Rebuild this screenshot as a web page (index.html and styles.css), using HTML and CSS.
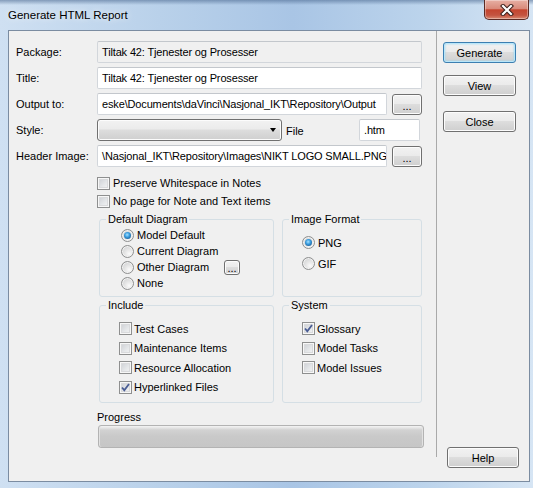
FILE: index.html
```html
<!DOCTYPE html>
<html>
<head>
<meta charset="utf-8">
<title>Generate HTML Report</title>
<link rel="stylesheet" href="styles.css">
</head>
<body>
<div class="window">
  <div class="titlebar">
    <span class="caption">Generate HTML Report</span>
    <div class="close">
      <svg width="14" height="12" viewBox="0 0 14 12">
        <path d="M3 2 L11 10 M11 2 L3 10" stroke="#3b1f1b" stroke-width="4.2" stroke-linecap="square" fill="none"/>
        <path d="M3 2 L11 10 M11 2 L3 10" stroke="#ffffff" stroke-width="2.2" stroke-linecap="square" fill="none"/>
      </svg>
    </div>
  </div>
  <div class="client">
    <div class="main">
      <div class="form">
        <span class="lbl">Package:</span>
        <div class="field disabled">Tiltak 42: Tjenester og Prosesser</div>
        <span class="lbl">Title:</span>
        <div class="field">Tiltak 42: Tjenester og Prosesser</div>
        <span class="lbl">Output to:</span>
        <div class="fieldrow">
          <div class="field grow">eske\Documents\daVinci\Nasjonal_IKT\Repository\Output</div>
          <div class="btn dots">...</div>
        </div>
        <span class="lbl">Style:</span>
        <div class="fieldrow">
          <div class="combo"><span class="arrow"></span></div>
          <span class="file-lbl">File</span>
          <div class="field ext">.htm</div>
        </div>
        <span class="lbl">Header Image:</span>
        <div class="fieldrow">
          <div class="field grow">\Nasjonal_IKT\Repository\Images\NIKT LOGO SMALL.PNG</div>
          <div class="btn dots">...</div>
        </div>
      </div>

      <div class="checks">
        <div class="chk"><span class="cb"></span><span>Preserve Whitespace in Notes</span></div>
        <div class="chk"><span class="cb"></span><span>No page for Note and Text items</span></div>
      </div>

      <div class="groups">
        <fieldset class="group">
          <legend>Default Diagram</legend>
          <div class="opts diag">
            <div class="opt"><span class="radio on"></span><span>Model Default</span></div>
            <div class="opt"><span class="radio"></span><span>Current Diagram</span></div>
            <div class="opt"><span class="radio"></span><span>Other Diagram</span><span class="btn mini">...</span></div>
            <div class="opt"><span class="radio"></span><span>None</span></div>
          </div>
        </fieldset>
        <fieldset class="group">
          <legend>Image Format</legend>
          <div class="opts fmt">
            <div class="opt"><span class="radio on"></span><span>PNG</span></div>
            <div class="opt"><span class="radio"></span><span>GIF</span></div>
          </div>
        </fieldset>
        <fieldset class="group">
          <legend>Include</legend>
          <div class="opts incl">
            <div class="opt"><span class="cb"></span><span>Test Cases</span></div>
            <div class="opt"><span class="cb"></span><span>Maintenance Items</span></div>
            <div class="opt"><span class="cb"></span><span>Resource Allocation</span></div>
            <div class="opt"><span class="cb on"><svg width="11" height="11" viewBox="0 0 11 11"><path d="M2 5.5 L4.3 8.2 L9 2" stroke="#4a5d94" stroke-width="1.8" fill="none"/></svg></span><span>Hyperlinked Files</span></div>
          </div>
        </fieldset>
        <fieldset class="group">
          <legend>System</legend>
          <div class="opts incl">
            <div class="opt"><span class="cb on"><svg width="11" height="11" viewBox="0 0 11 11"><path d="M2 5.5 L4.3 8.2 L9 2" stroke="#4a5d94" stroke-width="1.8" fill="none"/></svg></span><span>Glossary</span></div>
            <div class="opt"><span class="cb"></span><span>Model Tasks</span></div>
            <div class="opt"><span class="cb"></span><span>Model Issues</span></div>
          </div>
        </fieldset>
      </div>

      <div class="progress">
        <div class="prog-lbl">Progress</div>
        <div class="bar"></div>
      </div>
    </div>
    <div class="side">
      <div class="vsep"></div>
      <div class="btns">
        <div class="btn cmd default">Generate</div>
        <div class="btn cmd view">View</div>
        <div class="btn cmd">Close</div>
        <div class="btn cmd help">Help</div>
      </div>
    </div>
  </div>
</div>
</body>
</html>
```

FILE: styles.css
```css
* { box-sizing: border-box; }
html, body { margin: 0; padding: 0; }
body {
  width: 533px;
  height: 488px;
  overflow: hidden;
  font-family: "Liberation Sans", Arial, sans-serif;
  font-size: 11px;
  color: #000;
}
.window {
  width: 533px;
  height: 488px;
  display: flex;
  flex-direction: column;
  background:
    linear-gradient(180deg, rgba(70,100,140,0.55) 0, rgba(70,100,140,0) 5px),
    linear-gradient(90deg, #cfe0f2 0, #b9d1ea 30%, #a9c5e5 55%, #bcd4ec 80%, #d6e5f4 100%);
}
.titlebar {
  height: 30px;
  flex: none;
  display: flex;
  justify-content: space-between;
  align-items: flex-start;
  padding-left: 8px;
}
.caption {
  font-size: 11.5px;
  line-height: 16px;
  padding-top: 7px;
  color: #000;
  text-shadow: 0 0 6px rgba(255,255,255,0.9);
}
.close {
  width: 45px;
  height: 20px;
  margin-right: 4px;
  border: 1px solid #5b2a24;
  border-top: none;
  border-radius: 0 0 5px 5px;
  background: linear-gradient(180deg, #e7b0a4 0%, #d98a7b 45%, #c4452f 52%, #c45440 80%, #d98a72 100%);
  box-shadow: inset 0 0 0 1px rgba(255,255,255,0.35);
  display: flex;
  align-items: center;
  justify-content: center;
}
.client {
  flex: 1;
  margin: 0 3px 6px 8px;
  border: 1px solid #7b8ca1;
  background: #f0f0f0;
  display: flex;
}
.main {
  width: 427px;
  flex: none;
  display: flex;
  flex-direction: column;
}
.form {
  margin: 10px 0 0 7px;
  width: 406px;
  display: grid;
  grid-template-columns: 81px 325px;
  grid-auto-rows: 22px;
  row-gap: 4px;
}
.lbl { align-self: center; }
.field {
  height: 22px;
  border: 1px solid #d2d6db;
  border-top-color: #c3c7cc;
  border-radius: 2px;
  background: #fff;
  padding: 0 4px;
  line-height: 20px;
  white-space: nowrap;
  overflow: hidden;
  letter-spacing: -0.15px;
}
.field.disabled { background: #f0f0f0; }
.fieldrow {
  display: flex;
  align-items: center;
  gap: 5px;
}
.field.grow { flex: 1; min-width: 0; }
.btn {
  border: 1px solid #707070;
  border-radius: 3px;
  background: linear-gradient(180deg, #f2f2f2 0%, #ebebeb 45%, #dddddd 50%, #cfcfcf 100%);
  box-shadow: inset 0 0 0 1px #fcfcfc;
  display: flex;
  align-items: center;
  justify-content: center;
}
.dots { width: 30px; height: 21px; line-height: 1; padding-top: 4px; }
.combo {
  width: 185px;
  height: 22px;
  border: 1px solid #707070;
  border-radius: 3px;
  background: linear-gradient(180deg, #f2f2f2 0%, #ebebeb 45%, #dddddd 50%, #cfcfcf 100%);
  box-shadow: inset 0 0 0 1px #fcfcfc;
  display: flex;
  justify-content: flex-end;
  align-items: center;
  padding-right: 5px;
}
.arrow {
  width: 0;
  height: 0;
  border-top: 4px solid #000;
  border-left: 3.5px solid transparent;
  border-right: 3.5px solid transparent;
}
.file-lbl { margin-left: -1px; padding-top: 2px; }
.field.ext { width: 61px; margin-left: auto; margin-right: 2px; }

.checks { margin: 7px 0 0 88px; }
.chk {
  height: 18px;
  display: flex;
  align-items: center;
  gap: 3px;
}
.cb {
  width: 13px;
  height: 13px;
  flex: none;
  border: 1px solid #8e8f8f;
  background: linear-gradient(135deg, #c9ccd1 0%, #e6e8ea 60%, #f5f5f5 100%);
  box-shadow: inset 0 0 0 1px #f7f7f7, inset 0 0 0 2px #d9dadc;
  display: flex;
  align-items: center;
  justify-content: center;
}
.cb svg { display: block; }

.groups {
  margin: 1px 0 0 90px;
  display: grid;
  grid-template-columns: 175px 140px;
  grid-template-rows: 86px 106px;
  column-gap: 8px;
}
.group {
  margin: 0;
  padding: 0;
  min-width: 0;
  border: 1px solid #d5dfe5;
  border-radius: 3px;
}
.group legend {
  margin-left: 6px;
  padding: 0 2px;
  line-height: 16px;
  font-size: 11px;
}
.opt {
  display: flex;
  align-items: center;
}
.opt .radio, .opt .cb { margin-right: 3px; }
.diag { padding: 0 0 0 21px; }
.diag .opt { height: 16px; }
.fmt { padding: 5px 0 0 19px; }
.fmt .opt { height: 21px; }
.incl { padding: 6px 0 0 19px; }
.incl .opt { height: 19.5px; }
.incl .cb { margin-right: 2px; }

.radio {
  width: 13px;
  height: 13px;
  flex: none;
  border-radius: 50%;
  border: 1px solid #8e8f8f;
  background: radial-gradient(circle at 65% 70%, #fbfbfb 0%, #e8e8e8 35%, #c8c9ca 100%);
  box-shadow: inset 0 0 0 1px #f2f2f2;
  position: relative;
}
.radio.on::after {
  content: "";
  position: absolute;
  left: 2px;
  top: 2px;
  width: 7px;
  height: 7px;
  border-radius: 50%;
  background: radial-gradient(circle at 45% 40%, #a6e1ff 0%, #3b9ee0 40%, #1c5f98 80%, #143f6b 100%);
}
.mini {
  width: 16px;
  height: 15px;
  margin-left: auto;
  margin-right: 33px;
  padding-top: 3px;
  line-height: 1;
}

.progress { margin: 7px 0 0 88px; }
.prog-lbl { line-height: 15px; }
.bar {
  margin-left: 1px;
  width: 326px;
  height: 23px;
  border: 1px solid #b3b3b3;
  border-radius: 3px;
  background: linear-gradient(180deg, #f4f4f4 0, #e4e4e4 2px, #d2d2d2 4px, #c9c9c9 50%, #c6c6c6 100%);
  box-shadow: inset 1px 0 0 #e2e2e2, inset -1px 0 0 #e2e2e2;
}

.side {
  flex: 1;
  display: flex;
}
.vsep {
  width: 1px;
  height: 426px;
  background: #a9a9a9;
  flex: none;
}
.btns {
  flex: 1;
  display: flex;
  flex-direction: column;
  padding: 11px 0 13px 6px;
}
.cmd { width: 73px; height: 21px; }
.default {
  border-color: #3c7fb1;
  box-shadow: inset 0 0 0 1px #b9e6f9, inset 0 0 2px 1px #8fd6f4;
  margin-bottom: 12px;
}
.view { margin-bottom: 15px; }
.help { margin-top: auto; margin-left: 4px; width: 72px; }
```
